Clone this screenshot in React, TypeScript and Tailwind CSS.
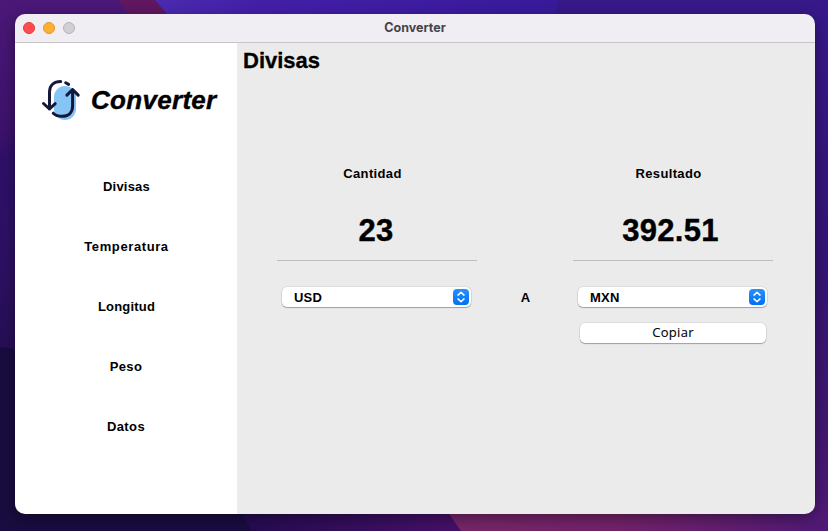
import React from "react";

function Wallpaper() {
  return (
    <svg className="absolute inset-0" width="828" height="531" viewBox="0 0 828 531" aria-hidden="true">
      <defs>
        <linearGradient id="left" x1="0" y1="0" x2="0" y2="1">
          <stop offset="0" stopColor="#4b1878" />
          <stop offset="0.24" stopColor="#3d126c" />
          <stop offset="0.3" stopColor="#2f1069" />
          <stop offset="0.5" stopColor="#2c1063" />
          <stop offset="0.65" stopColor="#270f55" />
        </linearGradient>
        <linearGradient id="top" x1="0" y1="0" x2="1" y2="0">
          <stop offset="0" stopColor="#4a2baf" />
          <stop offset="0.25" stopColor="#431fa8" />
          <stop offset="1" stopColor="#371a9a" />
        </linearGradient>
        <linearGradient id="right" x1="0" y1="0" x2="0" y2="1">
          <stop offset="0" stopColor="#37188a" />
          <stop offset="0.5" stopColor="#341475" />
          <stop offset="0.8" stopColor="#40176f" />
          <stop offset="1" stopColor="#511977" />
        </linearGradient>
        <linearGradient id="violet" x1="0" y1="0" x2="1" y2="0">
          <stop offset="0" stopColor="#230b50" />
          <stop offset="1" stopColor="#461069" />
        </linearGradient>
        <linearGradient id="magenta" x1="0" y1="0" x2="1" y2="0">
          <stop offset="0" stopColor="#772669" />
          <stop offset="0.45" stopColor="#742268" />
          <stop offset="1" stopColor="#4f1977" />
        </linearGradient>
      </defs>
      <rect width="828" height="531" fill="url(#left)" />
      <path d="M118 0H155L168 15L180 45H155Z" fill="#5f175f" />
      <path d="M155 0H560V45H180L168 15Z" fill="url(#top)" />
      <path d="M557 0H828V531H800V45H555Z" fill="url(#right)" />
      <path d="M0 347Q8 347 15 350L230 490L252 531H0Z" fill="#190c40" />
      <path d="M230 490H440L463 531H252Z" fill="url(#violet)" />
      <path d="M438 498L828 504V531H461Z" fill="url(#magenta)" />
    </svg>
  );
}

function Logo() {
  return (
    <svg width="40" height="44" viewBox="0 0 40 44" fill="none" className="shrink-0">
      <rect x="13" y="8" width="22" height="34" rx="11" fill="#85c4f5" />
      <g stroke="#141737" strokeWidth="3" strokeLinecap="round" strokeLinejoin="round">
        <path d="M19.7 3.5C13 3.5 8.5 7.4 8.5 14V31M2.5 25.5L8.5 31L14.2 25.7" />
        <path d="M24.7 4.8L27.6 6.4" />
        <path d="M31.6 11.5V28C31.6 35 27 38.3 21 38.3C17.4 38.3 14.6 37.5 12.3 35.2M25.9 17.1L31.6 11.5L37.2 17.1" />
      </g>
    </svg>
  );
}

function Stepper() {
  return (
    <span className="flex size-4 items-center justify-center rounded-[4px] bg-linear-to-b from-[#2490ff] to-[#0070f5]">
      <svg width="16" height="16" viewBox="0 0 16 16" fill="none" stroke="white" strokeWidth="1.5" strokeLinecap="round" strokeLinejoin="round">
        <path d="M5 6.1L8 3.3L11 6.1M5 9.9L8 12.7L11 9.9" />
      </svg>
    </span>
  );
}

const control = "flex h-5 items-center rounded-[5px] bg-white shadow-[0_0_0_0.5px_rgba(0,0,0,0.13),0_1px_1px_rgba(0,0,0,0.28)]";

function Select({ value }: { value: string }) {
  return (
    <button className={`${control} ml-[5px] mt-[26px] w-[189px] justify-between pl-3 pr-0.5`}>
      <span className="pt-px tracking-[0.2px]">{value}</span>
      <Stepper />
    </button>
  );
}

function Amount({ label, value, currency, wide }: { label: string; value: string; currency: string; wide?: boolean }) {
  return (
    <section className="flex w-[200px] flex-col">
      <h2 className="pr-[9px] text-center leading-5 tracking-[0.35px]">{label}</h2>
      <div className={`mt-[27px] flex h-[50px] items-start justify-center border-b border-[#bcbcbc] text-[31px] leading-10 ${wide ? "pr-[5px] tracking-[0.25px]" : "pr-[2px] tracking-[0.3px]"}`}>
        <span className="[-webkit-text-stroke:0.4px_black]">{value}</span>
      </div>
      <Select value={currency} />
      {wide && (
        <button className={`${control} ml-[7px] mt-4 w-[186px] justify-center font-['Open_Sans',sans-serif] text-[13px] font-normal tracking-[0.3px] [-webkit-text-stroke:0.1px_black]`}>
          Copiar
        </button>
      )}
    </section>
  );
}

const categories = [
  { name: "Divisas", tracking: "tracking-[0.2px] pl-px" },
  { name: "Temperatura", tracking: "tracking-[0.6px] pl-px" },
  { name: "Longitud", tracking: "tracking-[0.2px] pl-px" },
  { name: "Peso", tracking: "tracking-[0.35px]" },
  { name: "Datos", tracking: "tracking-[0.4px]" },
];

export default function App() {
  return (
    <div className="relative h-[531px] w-[828px] overflow-hidden bg-[#271053] pl-[15px] pt-[14px] font-['Arial_Rounded_MT_Bold','Liberation_Sans',sans-serif] text-[13px] font-bold text-black">
      <Wallpaper />
      <div className="relative flex h-[500px] w-[800px] flex-col overflow-hidden rounded-[10px] shadow-[0_4px_14px_rgba(0,0,0,0.4)]">
        <header className="grid h-[29px] shrink-0 grid-cols-3 items-center border-b border-[#c7c4c9] bg-[#f0edf3]">
          <div className="flex gap-2 pl-2">
            <span className="size-3 rounded-full border border-[#e2393f] bg-[#fe4b4d]" />
            <span className="size-3 rounded-full border border-[#df982c] bg-[#ffb032]" />
            <span className="size-3 rounded-full border border-[#b5b3b8] bg-[#d1ced4]" />
          </div>
          <h1 className="pb-px text-center font-['Inter',sans-serif] text-[12.5px] leading-5 text-[#464448]">Converter</h1>
        </header>
        <div className="flex flex-1">
          <aside className="w-[222px] shrink-0 bg-white">
            <div className="flex h-[113px] items-start pl-[26px] pt-[35px]">
              <Logo />
              <span className="ml-[10px] mt-[5px] text-[26px] italic leading-[34px] tracking-[0.3px] [-webkit-text-stroke:0.4px_black]">Converter</span>
            </div>
            <nav className="flex flex-col">
              {categories.map(({ name, tracking }) => (
                <a key={name} className={`h-[60px] pt-[21px] text-center leading-5 ${tracking}`}>{name}</a>
              ))}
            </nav>
          </aside>
          <main className="flex-1 bg-[#ebebeb]">
            <h2 className="pl-[6px] pt-[3px] text-[22px] leading-[30px] [-webkit-text-stroke:0.3px_black]">Divisas</h2>
            <div className="mt-[88px] flex pl-10">
              <Amount label="Cantidad" value="23" currency="USD" />
              <span className="mt-[124px] w-24 pl-px text-center leading-5">A</span>
              <Amount label="Resultado" value="392.51" currency="MXN" wide />
            </div>
          </main>
        </div>
      </div>
    </div>
  );
}
